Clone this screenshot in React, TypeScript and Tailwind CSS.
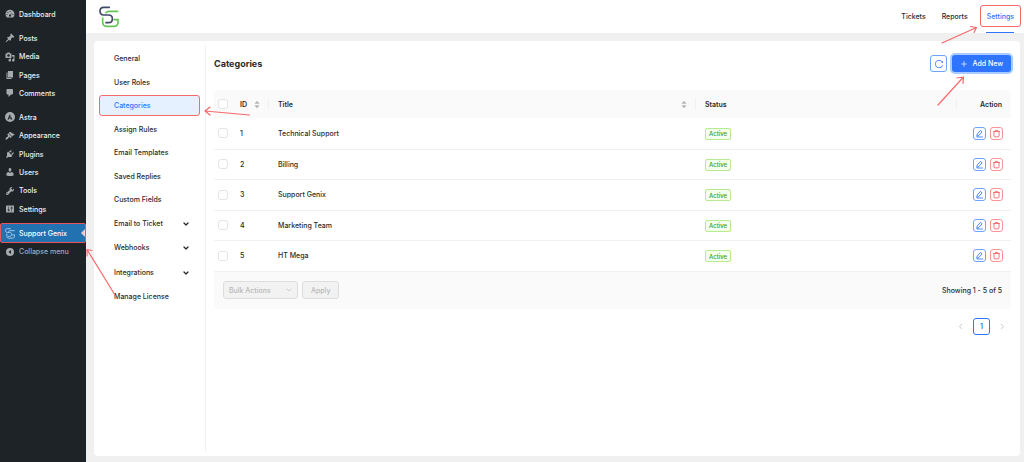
import React from "react";
import { AiOutlineReload } from "react-icons/ai";
import { Check, ChevronDown, ChevronLeft, ChevronRight, Plus } from "lucide-react";

type MenuItem = { title: string; path: string };

const menuGroups: MenuItem[][] = [
  [
    {
      title: "Dashboard",
      path: "M3.76 17h12.48A9 9 0 1 0 3.76 17zM10 4.2a1 1 0 1 1 0 2 1 1 0 0 1 0-2zM5.8 6a1 1 0 1 1 0 2 1 1 0 0 1 0-2zm8.9.4L11.6 12a2 2 0 1 1-1.2-.7zM4 10a1 1 0 1 1 0 2 1 1 0 0 1 0-2zm12 0a1 1 0 1 1 0 2 1 1 0 0 1 0-2z",
    },
  ],
  [
    {
      title: "Posts",
      path: "M10.44 3.02l1.82-1.82 6.36 6.35-1.83 1.82c-1.05-.68-2.48-.57-3.41.36l-.75.75c-.92.93-1.04 2.35-.35 3.41l-1.83 1.82-2.41-2.41-2.8 2.79c-.42.42-3.38 2.71-3.8 2.29s1.86-3.39 2.28-3.81l2.79-2.79L4.1 9.36l1.83-1.82c1.05.69 2.48.57 3.4-.36l.75-.75c.93-.92 1.05-2.35.36-3.41z",
    },
    {
      title: "Media",
      path: "M13 11V4c0-.55-.45-1-1-1h-1.67L9 1H5L3.67 3H2c-.55 0-1 .45-1 1v7c0 .55.45 1 1 1h10c.55 0 1-.45 1-1zM7 4.5c1.38 0 2.5 1.12 2.5 2.5S8.38 9.5 7 9.5 4.5 8.38 4.5 7 5.62 4.5 7 4.5zM14 6h5v10.5c0 1.38-1.12 2.5-2.5 2.5S14 17.88 14 16.5s1.12-2.5 2.5-2.5c.17 0 .34.02.5.05V9h-3V6zm-4 8.05V13h2v3.5c0 1.38-1.12 2.5-2.5 2.5S7 17.88 7 16.5 8.12 14 9.5 14c.17 0 .34.02.5.05z",
    },
    { title: "Pages", path: "M6 15V2h10v13H6zm-1 1h8v2H3V5h2v11z" },
    {
      title: "Comments",
      path: "M5 2h9c1.1 0 2 .9 2 2v7c0 1.1-.9 2-2 2h-2l-5 5v-5H5c-1.1 0-2-.9-2-2V4c0-1.1.9-2 2-2z",
    },
  ],
  [
    {
      title: "Astra",
      path: "M10 0a10 10 0 1 0 0 20 10 10 0 0 0 0-20zM9.6 4.6l1.7 3.4-3.5 7H5zm2.2 4.6l3 5.8h-3l-1-2H9.6z",
    },
    {
      title: "Appearance",
      path: "M14.48 11.06L7.41 3.99l1.5-1.5c.5-.56 2.3-.47 3.51.32 1.21.8 1.43 1.28 2.91 2.1 1.18.64 2.45 1.26 4.45.85zm-.71.71L6.7 4.7 4.93 6.47c-.39.39-.39 1.02 0 1.41l1.06 1.06c.39.39.39 1.03 0 1.42-.6.6-1.43 1.11-2.21 1.69-.35.26-.7.53-1.01.84C1.43 14.23.4 16.08 1.4 17.07c.99 1 2.84-.03 4.18-1.36.31-.31.58-.66.85-1.02.57-.78 1.08-1.61 1.69-2.21.39-.39 1.02-.39 1.41 0l1.06 1.06c.39.39 1.02.39 1.41 0z",
    },
    {
      title: "Plugins",
      path: "M13.11 4.36L9.87 7.6 8 5.73l3.24-3.24c.35-.34 1.05-.2 1.56.32.52.51.66 1.21.31 1.55zm-8 1.77l.91-1.12 9.01 9.01-1.19.84c-.71.71-2.63 1.16-3.82 1.16H6.14L4.9 17.26c-.59.59-1.54.59-2.12 0-.59-.58-.59-1.53 0-2.12l1.24-1.24v-3.88c0-1.13.4-3.19 1.09-3.89zm7.26 3.97l3.24-3.24c.34-.35 1.04-.21 1.55.31.52.51.66 1.21.31 1.55l-3.24 3.25z",
    },
    {
      title: "Users",
      path: "M10 9.25c-2.27 0-2.73-3.44-2.73-3.44C7 4.02 7.82 2 9.97 2c2.16 0 2.98 2.02 2.71 3.81 0 0-.41 3.44-2.68 3.44zm0 2.57L12.72 10c2.39 0 4.52 2.33 4.52 4.53v2.49s-3.65 1.13-7.24 1.13c-3.65 0-7.24-1.13-7.24-1.13v-2.49c0-2.25 1.94-4.48 4.47-4.48z",
    },
    {
      title: "Tools",
      path: "M16.68 9.77c-1.34 1.34-3.3 1.67-4.95.99l-5.41 6.52c-.99.99-2.59.99-3.58 0s-.99-2.59 0-3.57l6.52-5.42c-.68-1.65-.35-3.61.99-4.95 1.28-1.28 3.12-1.62 4.72-1.06l-2.89 2.89 2.82 2.82 2.86-2.87c.53 1.58.18 3.39-1.08 4.65zM3.81 16.21c.4.39 1.04.39 1.43 0 .4-.4.4-1.04 0-1.43-.39-.4-1.03-.4-1.43 0-.39.39-.39 1.03 0 1.43z",
    },
    {
      title: "Settings",
      path: "M18 16V4c0-.55-.45-1-1-1H3c-.55 0-1 .45-1 1v12c0 .55.45 1 1 1h14c.55 0 1-.45 1-1zM8 11h1c.55 0 1 .45 1 1s-.45 1-1 1H8v1.5c0 .28-.22.5-.5.5s-.5-.22-.5-.5V13H6c-.55 0-1-.45-1-1s.45-1 1-1h1V5.5c0-.28.22-.5.5-.5s.5.22.5.5V11zm5-2h-1c-.55 0-1-.45-1-1s.45-1 1-1h1V5.5c0-.28.22-.5.5-.5s.5.22.5.5V7h1c.55 0 1 .45 1 1s-.45 1-1 1h-1v5.5c0 .28-.22.5-.5.5s-.5-.22-.5-.5V9z",
    },
  ],
];

const settingsLinks = [
  "General",
  "User Roles",
  "Categories",
  "Assign Rules",
  "Email Templates",
  "Saved Replies",
  "Custom Fields",
];

const settingsSections = [
  { title: "Email to Ticket", expandable: true },
  { title: "Webhooks", expandable: true },
  { title: "Integrations", expandable: true },
  { title: "Manage License", expandable: false },
];

const categories = [
  { id: 1, title: "Technical Support" },
  { id: 2, title: "Billing" },
  { id: 3, title: "Support Genix" },
  { id: 4, title: "Marketing Team" },
  { id: 5, title: "HT Mega" },
];

const Logo = ({ className, dark, green }: { className: string; dark: string; green: string }) => (
  <svg viewBox="0 0 60 66" className={className} fill="none" strokeWidth="5" strokeLinecap="round">
    <path stroke={dark} d="M31 4H14C7 4 3 8 3 15s4 12 11 12h15c7 0 11 4 11 11s-4 12-11 12h-8" />
    <path stroke={green} d="M56 16H30c-4 0-7 1-9 4M11 36v12c0 8 4 13 12 13h22c8 0 12-5 12-13v-7H45" />
  </svg>
);

const Arrow = ({ className, box, d }: { className: string; box: string; d: string }) => (
  <svg
    viewBox={box}
    className={`absolute pointer-events-none z-10 ${className}`}
    fill="none"
    stroke="#f8696b"
    strokeWidth="1.2"
    strokeLinecap="round"
    strokeLinejoin="round"
  >
    <path d={d} />
  </svg>
);

const Sorter = () => (
  <svg viewBox="0 0 6 9" className="w-[6px] h-[9px] shrink-0" fill="#b5b5b5">
    <path d="M3 .8L5.600 3.800H.4zM3 8.200L.4 5.200h5.200z" />
  </svg>
);

const Tick = ({ label }: { label: string }) => (
  <span className="relative flex w-[10px] h-[10px]">
    <input
      type="checkbox"
      aria-label={label}
      className="peer appearance-none w-full h-full rounded-[3px] border border-[#e4e4e4] bg-white checked:bg-[#2f74ff]"
    />
    <Check className="absolute inset-0 hidden w-full h-full text-white peer-checked:block pointer-events-none" />
  </span>
);

const Sidebar = () => (
  <aside className="relative w-[86px] shrink-0 bg-[#1d2327] text-[#f0f0f1]">
    <nav className="flex flex-col gap-[6px] pt-[5px]">
      {menuGroups.map((group) => (
        <ul key={group[0].title}>
          {group.map((item) => (
            <li key={item.title} className="h-[18px] nth-[3n+2]:h-[19px]">
              <a href="#" className="flex items-center h-full gap-1 pl-[5px]">
                <svg viewBox="0 0 20 20" className="w-[10px] h-[10px] shrink-0" fill="#a7aaad" fillRule="evenodd">
                  <path d={item.path} />
                </svg>
                {item.title}
              </a>
            </li>
          ))}
        </ul>
      ))}
    </nav>
    <a
      href="#"
      className="relative flex items-center gap-1 h-[20px] mt-[5px] pl-[4px] bg-[#2271b1] border border-[#e2565c] rounded-[2px] text-white"
    >
      <Logo className="w-[10px] h-[11px] shrink-0" dark="#b9d6ee" green="#b9d6ee" />
      Support Genix
      <svg viewBox="0 0 4 8" className="absolute right-0 w-[4px] h-[8px]" fill="#f6c9cb">
        <path d="M4 0v8L0 4z" />
      </svg>
    </a>
    <button className="flex items-center gap-1 h-[17px] pl-[5px] text-[#a7aaad]">
      <svg viewBox="0 0 20 20" className="w-[10px] h-[10px] shrink-0" fill="#a7aaad" fillRule="evenodd">
        <path d="M10 2a8 8 0 1 0 0 16 8 8 0 0 0 0-16zm2 4v8l-5-4z" />
      </svg>
      Collapse menu
    </button>
    <Arrow
      className="left-[84px] top-[246px] w-[34px] h-[52px]"
      box="84 246 34 52"
      d="M115 295L87 249.500M92 250.500L87 249.500L87 256"
    />
  </aside>
);

const Header = () => (
  <header className="relative flex justify-between h-[33px] bg-white pl-[13px] pr-[3px]">
    <Logo className="w-[20px] h-[22px] mt-[6px]" dark="#414a6b" green="#66c457" />
    <nav className="flex">
      <a href="#" className="flex items-center px-2">Tickets</a>
      <a href="#" className="flex items-center px-2">Reports</a>
      <div className="relative flex flex-col items-center ml-[4px]">
        <a href="#" className="flex items-center h-[22px] mt-[5px] px-[6px] border border-[#f8696b] rounded-[3px] text-[#2f74ff]">
          Settings
        </a>
        <span className="w-[28px] h-[1px] mt-auto bg-[#2f74ff]" />
      </div>
    </nav>
    <Arrow
      className="right-[46px] top-[24px] w-[38px] h-[21px]"
      box="940 24 38 21"
      d="M942 43L976.500 27.500M970.500 26.500L976.500 27.500L974 32.500"
    />
  </header>
);

const SettingsNav = () => (
  <nav className="relative w-[112px] shrink-0 my-[5px] px-[5px] pt-[2px] border-r border-[#f0f0f0]">
    <ul>
      {settingsLinks.map((title) => (
        <li key={title} className="mb-[3px] even:mb-[2px]">
          <a
            href="#"
            className={
              title === "Categories"
                ? "flex items-center h-[21px] pl-[14px] bg-[#e6f1ff] text-[#2f74ff] border border-[#f8696b] rounded-[3px]"
                : "flex items-center h-[21px] pl-[14px] border border-transparent"
            }
          >
            {title}
          </a>
        </li>
      ))}
    </ul>
    <ul>
      {settingsSections.map((section) => (
        <li key={section.title} className="mb-[3px] even:mb-[4px]">
          <button className="flex items-center justify-between w-full h-[21px] pl-[15px] pr-[10px]">
            {section.title}
            {section.expandable && <ChevronDown className="w-[8px] h-[8px]" strokeWidth={4} />}
          </button>
        </li>
      ))}
    </ul>
    <Arrow
      className="left-[108px] top-[58px] w-[50px] h-[14px]"
      box="202 104 50 14"
      d="M249.500 115L205 111M210 107L205 111L210 115"
    />
  </nav>
);

const CategoryTable = () => (
  <div className="rounded-[4px] overflow-hidden">
    <table className="w-full table-fixed text-left">
      <colgroup>
        <col className="w-[17px]" />
        <col className="w-[38px]" />
        <col />
        <col className="w-[261px]" />
        <col className="w-[54px]" />
      </colgroup>
      <thead className="bg-[#fafafa]">
        <tr className="h-[28px]">
          <th className="pl-[4px]"><Tick label="Select all" /></th>
          <th className="pl-[9px] font-semibold">
            <div className="flex items-center justify-between h-[12px] pr-[8px] border-r border-[#f0f0f0]">ID <Sorter /></div>
          </th>
          <th className="pl-[9px] font-semibold">
            <div className="flex items-center justify-between h-[12px] pr-[8px] border-r border-[#f0f0f0]">Title <Sorter /></div>
          </th>
          <th className="pl-[9px] font-semibold">
            <div className="flex items-center h-[12px] border-r border-[#f0f0f0]">Status</div>
          </th>
          <th className="pr-[9px] text-right font-semibold">Action</th>
        </tr>
      </thead>
      <tbody>
        {categories.map((category) => (
          <tr key={category.id} className="h-[31px] even:h-[30px] border-b border-[#f0f0f0]">
            <td className="pl-[4px]"><Tick label={`Select ${category.title}`} /></td>
            <td className="pl-[9px]">{category.id}</td>
            <td className="pl-[9px]">{category.title}</td>
            <td className="pl-[9px]">
              <span className="inline-flex items-center h-[12px] px-[3px] align-middle text-[6px] text-[#389e0d] bg-[#f6ffed] border border-[#b7eb8f] rounded-[2px]">
                Active
              </span>
            </td>
            <td className="pr-[8px]">
              <div className="flex justify-end gap-1">
                <button aria-label="Edit" className="flex items-center justify-center w-[13px] h-[13px] border border-[#6ea3ff] rounded-[3px]">
                  <svg viewBox="0 0 16 16" className="w-[9px] h-[9px]" fill="none" stroke="#2f74ff" strokeWidth="1.5" strokeLinejoin="round">
                    <path d="M9.500 2.500l3 2.500-5.500 6.500-4 1.500 1-4zM3 14.200h11" />
                  </svg>
                </button>
                <button aria-label="Delete" className="flex items-center justify-center w-[13px] h-[13px] border border-[#fb9496] rounded-[3px]">
                  <svg viewBox="0 0 16 16" className="w-[9px] h-[9px]" fill="none" stroke="#f8595c" strokeWidth="1.5" strokeLinejoin="round">
                    <path d="M2 4.500h12M5.500 4.500l.5-2h4l.5 2M3.500 4.500v7.500a2 2 0 0 0 2 2h5a2 2 0 0 0 2-2V4.500" />
                  </svg>
                </button>
              </div>
            </td>
          </tr>
        ))}
      </tbody>
    </table>
    <div className="flex items-center justify-between h-[37px] pl-[9px] pr-[9px] bg-[#fafafa]">
      <div className="flex gap-1 text-[#b8b8b8]">
        <div className="relative">
          <select
            disabled
            aria-label="Bulk Actions"
            className="appearance-none w-[75px] h-[18px] pl-[5px] bg-[#f2f2f2] border border-[#dedede] rounded-[3px] opacity-100"
          >
            <option>Bulk Actions</option>
          </select>
          <ChevronDown className="absolute right-[5px] top-[5px] w-[8px] h-[8px]" />
        </div>
        <button disabled className="h-[18px] px-[8px] bg-[#f2f2f2] border border-[#dedede] rounded-[3px]">
          Apply
        </button>
      </div>
      <span>Showing 1 - 5 of 5</span>
    </div>
  </div>
);

const App = () => {
  return (
    <div className="flex min-h-screen bg-[#f0f0f1] text-[#2b2b2b] text-[7px] font-medium leading-[13px] [font-family:Inter,sans-serif]">
      <Sidebar />
      <div className="flex flex-col flex-1 min-w-0">
        <Header />
        <main className="flex flex-1 mt-[8px] mb-[6px] ml-[8px] mr-[4px] bg-white rounded-[4px]">
          <SettingsNav />
          <section className="flex-1 min-w-0 pl-[8px] pr-[9px] pt-[14px]">
            <div className="relative flex items-center justify-between h-[17px] mb-[18px]">
              <h1 className="text-[9px] font-bold">Categories</h1>
              <div className="flex gap-[5px]">
                <button aria-label="Refresh" className="flex items-center justify-center w-[17px] h-[17px] border border-[#6ea3ff] rounded-[3px] text-[#2f74ff]">
                  <AiOutlineReload className="w-[10px] h-[10px]" />
                </button>
                <button className="flex items-center gap-1 h-[17px] px-[8px] bg-[#2f74ff] rounded-[3px] text-white ring-2 ring-[#a9cbff]">
                  <Plus className="w-[8px] h-[8px]" />
                  Add New
                </button>
              </div>
              <Arrow
                className="right-[44px] top-[19px] w-[32px] h-[34px]"
                box="935 74 32 34"
                d="M938 105L963.500 77M957 78L963.500 77L963 83.500"
              />
            </div>
            <CategoryTable />
            <nav aria-label="Pagination" className="flex items-center justify-end gap-[8px] mt-[9px] pr-[4px]">
              <button disabled aria-label="Previous page"><ChevronLeft className="w-[9px] h-[9px] text-[#b8b8b8]" /></button>
              <button className="w-[17px] h-[17px] border border-[#2f74ff] rounded-[3px] text-[#2f74ff] font-semibold">1</button>
              <button disabled aria-label="Next page"><ChevronRight className="w-[9px] h-[9px] text-[#b8b8b8]" /></button>
            </nav>
          </section>
        </main>
      </div>
    </div>
  );
};

export default App;
